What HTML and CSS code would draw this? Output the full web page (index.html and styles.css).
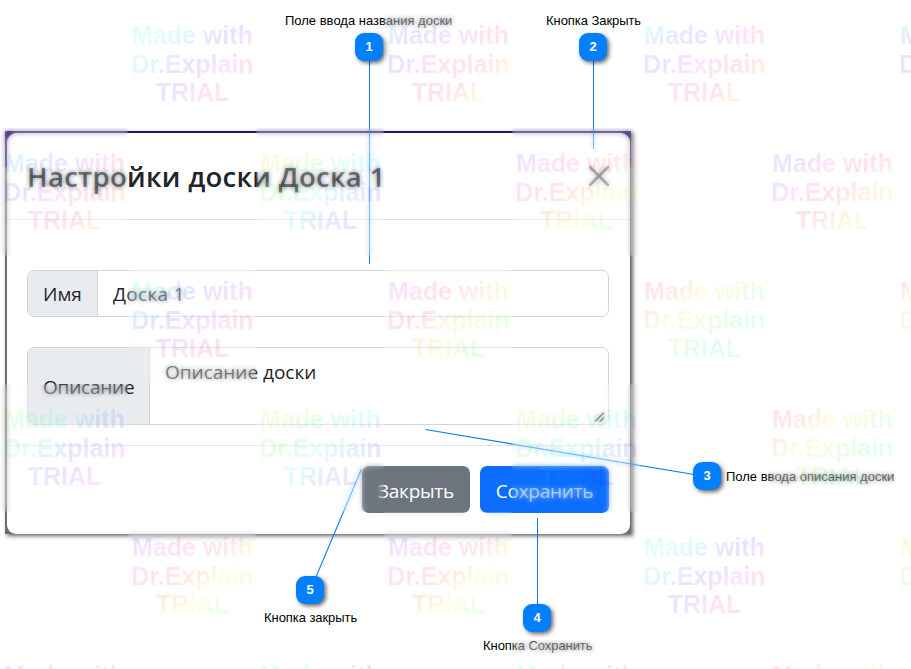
FILE: index.html
```html
<!DOCTYPE html>
<html lang="ru">
<head>
<meta charset="utf-8">
<title>Настройки доски</title>
<link rel="stylesheet" href="styles.css">
</head>
<body>
<main class="stage">
  <div class="frame">
    <section class="modal">
      <header class="modal-header">
        <h1 class="title">Настройки доски Доска 1</h1>
        <svg class="close" viewBox="0 0 20 20"><path d="M1 1L19 19M19 1L1 19"/></svg>
      </header>
      <div class="modal-body">
        <div class="group name">
          <span class="addon"><span class="t-name">Имя</span></span>
          <span class="field"><span class="t-value">Доска 1</span></span>
        </div>
        <div class="group about">
          <span class="addon"><span class="t-about">Описание</span></span>
          <span class="field"><span class="t-desc">Описание доски</span></span>
          <svg class="grip" viewBox="0 0 12 12"><path d="M1 10.500L10 1.500M6 10.500L10 6.500"/></svg>
        </div>
      </div>
      <footer class="modal-footer">
        <span class="btn secondary"><span class="t-close">Закрыть</span></span>
        <span class="btn primary"><span class="t-save">Сохранить</span></span>
      </footer>
    </section>
  </div>

  <svg class="leaders" viewBox="0 0 911 669">
    <path class="straight" d="M369.500 60V264M593.500 60V149M537.500 518V606"/>
    <path d="M425.500 429.500L694 474.500M316 577L361.500 469"/>
  </svg>
  <span class="pin p1">1</span><span class="note n1">Поле ввода названия доски</span>
  <span class="pin p2">2</span><span class="note n2">Кнопка Закрыть</span>
  <span class="pin p3">3</span><span class="note n3">Поле ввода описания доски</span>
  <span class="pin p4">4</span><span class="note n4">Кнопка Сохранить</span>
  <span class="pin p5">5</span><span class="note n5">Кнопка закрыть</span>

  <div class="watermark">
    <i></i><b class="h75"><span>Made with<br>Dr.Explain<br>TRIAL</span></b><i></i><b class="h150"><span>Made with<br>Dr.Explain<br>TRIAL</span></b><i></i><b class="h135"><span>Made with<br>Dr.Explain<br>TRIAL</span></b><i></i><b class="h150"><span>Made with<br>Dr.Explain<br>TRIAL</span></b>
    <b class="h135"><span>Made with<br>Dr.Explain<br>TRIAL</span></b><i></i><b class="h0"><span>Made with<br>Dr.Explain<br>TRIAL</span></b><i></i><b class="h205"><span>Made with<br>Dr.Explain<br>TRIAL</span></b><i></i><b class="h175"><span>Made with<br>Dr.Explain<br>TRIAL</span></b><i></i>
    <i></i><b class="h105"><span>Made with<br>Dr.Explain<br>TRIAL</span></b><i></i><b class="h225"><span>Made with<br>Dr.Explain<br>TRIAL</span></b><i></i><b class="h285"><span>Made with<br>Dr.Explain<br>TRIAL</span></b><i></i><b class="h315"><span>Made with<br>Dr.Explain<br>TRIAL</span></b>
    <b class="h45"><span>Made with<br>Dr.Explain<br>TRIAL</span></b><i></i><b class="h0"><span>Made with<br>Dr.Explain<br>TRIAL</span></b><i></i><b class="h0"><span>Made with<br>Dr.Explain<br>TRIAL</span></b><i></i><b class="h285"><span>Made with<br>Dr.Explain<br>TRIAL</span></b><i></i>
    <i></i><b class="h205"><span>Made with<br>Dr.Explain<br>TRIAL</span></b><i></i><b class="h205"><span>Made with<br>Dr.Explain<br>TRIAL</span></b><i></i><b class="h75"><span>Made with<br>Dr.Explain<br>TRIAL</span></b><i></i><b class="h0"><span>Made with<br>Dr.Explain<br>TRIAL</span></b>
    <b class="h175"><span>Made with<br>Dr.Explain<br>TRIAL</span></b><i></i><b class="h75"><span>Made with<br>Dr.Explain<br>TRIAL</span></b><i></i><b class="h105"><span>Made with<br>Dr.Explain<br>TRIAL</span></b><i></i><b class="h285"><span>Made with<br>Dr.Explain<br>TRIAL</span></b><i></i>
  </div>
</main>
</body>
</html>
```
FILE: styles.css
```css
* { box-sizing: border-box; }
body { margin: 0; background: #fff; }
.stage {
  position: relative;
  width: 911px;
  height: 669px;
  overflow: hidden;
  padding: 131px 0 0 5px;
  background: #fff;
  font-family: "Open Sans", "Noto Sans", sans-serif;
  color: #212529;
}
.frame {
  width: 626px;
  height: 403px;
  padding: 2px 1px 0 2px;
  background: linear-gradient(#2e1268 36px, #6c6c6c 36px);
  box-shadow: 2px 2px 4px rgba(0, 0, 0, .6);
}
.modal {
  height: 401px;
  background: #fff;
  border-radius: 9px;
  display: flex;
  flex-direction: column;
}
.modal-header {
  height: 87px;
  padding: 0 21px 0 20px;
  border-bottom: 1px solid #dee2e6;
  display: flex;
  align-items: center;
  justify-content: space-between;
}
.title {
  margin: 0;
  padding-top: 1px;
  font-size: 27.5px;
  line-height: 40px;
  font-weight: 600;
  letter-spacing: .28px;
  white-space: nowrap;
}
.close { width: 20px; height: 20px; fill: none; stroke: #7c7c7c; stroke-width: 2.6; stroke-linecap: round; }
.modal-body {
  height: 225px;
  padding: 50px 21px 0 20px;
  display: flex;
  flex-direction: column;
  gap: 30px;
}
.group {
  position: relative;
  display: flex;
  border: 1px solid #ced4da;
  border-radius: 7px;
  overflow: hidden;
  font-size: 19px;
  line-height: 28px;
  white-space: nowrap;
}
.name { height: 47px; }
.about { height: 78px; }
.addon {
  display: flex;
  align-items: center;
  padding-left: 15px;
  background: #e9ecef;
  border-right: 1px solid #ced4da;
}
.name .addon { width: 70px; }
.about .addon { width: 122px; padding-top: 2px; letter-spacing: -.2px; }
.field { flex: 1; padding: 9px 15px; }
.name .field { letter-spacing: .3px; }
.about .field { padding-top: 10px; }
.grip { position: absolute; right: 2px; bottom: 1px; width: 12px; height: 12px; fill: none; stroke: #444; stroke-width: 1.6; }
.modal-footer {
  flex: 1;
  border-top: 1px solid #dee2e6;
  padding: 20px 21px 0 0;
  display: flex;
  justify-content: flex-end;
  gap: 10px;
}
.btn {
  height: 47px;
  padding-top: 2px;
  border-radius: 7px;
  display: flex;
  align-items: center;
  justify-content: center;
  color: #fff;
  font-size: 19px;
  letter-spacing: -.25px;
  white-space: nowrap;
}
.secondary { width: 108px; background: #6c757d; }
.primary { width: 129px; background: #0d6efd; }

.leaders { position: absolute; left: 0; top: 0; width: 911px; height: 669px; fill: none; stroke: #0080ff; stroke-width: 1.1; }
.straight { stroke: #0877df; stroke-width: 1; }
.pin {
  position: absolute;
  width: 28px;
  height: 28px;
  border-radius: 9px;
  background: #0080ff;
  box-shadow: 2px 2px 4px rgba(0, 0, 0, .6);
  color: #fff;
  font: bold 13px/28px "Liberation Sans", Arial, sans-serif;
  text-align: center;
}
.p1 { left: 355px; top: 33px; }
.p2 { left: 579px; top: 33px; }
.p3 { left: 693px; top: 462px; }
.p4 { left: 523px; top: 604px; }
.p5 { left: 296px; top: 576px; }
.note {
  position: absolute;
  color: #000;
  font: 13px/16px "Liberation Sans", Arial, sans-serif;
  white-space: nowrap;
}
.n1 { left: 285px; top: 13px; }
.n2 { left: 546px; top: 13px; }
.n3 { left: 726px; top: 469px; }
.n4 { left: 483px; top: 638px; }
.n5 { left: 264px; top: 610px; }
.n2, .n4, .n5 { letter-spacing: -.06px; }

.watermark {
  position: absolute;
  left: 0;
  top: 0;
  display: grid;
  grid-template-columns: repeat(8, 128px);
  grid-auto-rows: 128px;
}
.watermark b { position: relative; }
.watermark b::before {
  content: "";
  position: absolute;
  inset: 0;
  backdrop-filter: blur(2.5px);
  opacity: .55;
}
.watermark span {
  position: relative;
  display: block;
  height: 128px;
  padding: 21px 0 0 1px;
  text-align: center;
  font: bold 25px/28.5px "Liberation Sans", Arial, sans-serif;
  color: transparent;
  background: linear-gradient(142deg,
    hsl(calc(var(--h) + 0) 100% 50% / .11),
    hsl(calc(var(--h) + 43) 100% 50% / .11),
    hsl(calc(var(--h) + 86) 100% 50% / .11),
    hsl(calc(var(--h) + 129) 100% 50% / .11),
    hsl(calc(var(--h) + 172) 100% 50% / .11),
    hsl(calc(var(--h) + 215) 100% 50% / .11),
    hsl(calc(var(--h) + 258) 100% 50% / .11),
    hsl(calc(var(--h) + 301) 100% 50% / .11),
    hsl(calc(var(--h) + 344) 100% 50% / .11));
  -webkit-background-clip: text;
  background-clip: text;
}
.h0 { --h: 0; }
.h45 { --h: 45; }
.h75 { --h: 75; }
.h105 { --h: 105; }
.h135 { --h: 135; }
.h150 { --h: 150; }
.h175 { --h: 175; }
.h205 { --h: 205; }
.h225 { --h: 225; }
.h285 { --h: 285; }
.h315 { --h: 315; }
```
